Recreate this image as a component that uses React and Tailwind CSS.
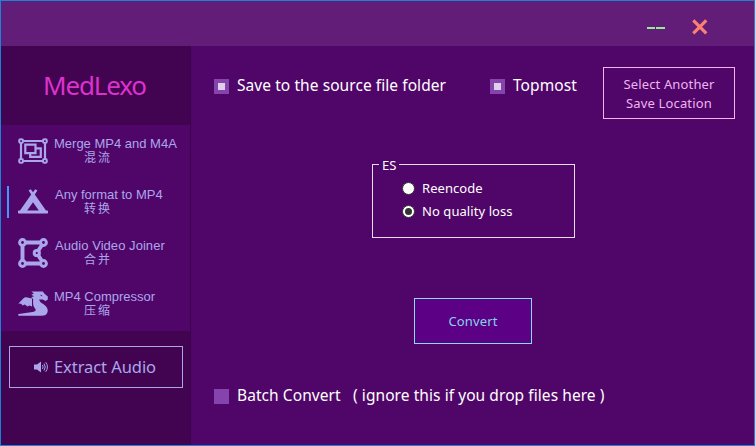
const CJK = "font-['Noto_Sans_CJK_SC',sans-serif]";

function MergeIcon() {
  return (
    <svg width="30" height="26" viewBox="0 0 30 26" fill="none" stroke="currentColor">
      <path d="M5.5 3h19M5.5 23h19M3 5.5v15M27 5.5v15" strokeWidth="2.2" />
      <g strokeWidth="2">
        <rect x="1.2" y="1.2" width="3.8" height="3.8" rx="1.4" />
        <rect x="25" y="1.2" width="3.8" height="3.8" rx="1.4" />
        <rect x="1.2" y="21" width="3.8" height="3.8" rx="1.4" />
        <rect x="25" y="21" width="3.8" height="3.8" rx="1.4" />
      </g>
      <path d="M7.3 6.7h10.2v8.4H7.3zM18 10.4h4.8v8.4H12.2v-3.6" strokeWidth="2.2" />
    </svg>
  );
}

function CampIcon() {
  return (
    <svg width="30" height="25" viewBox="0 0 30 25" fill="currentColor">
      <path d="M10.6 1.6L12.8.3 15 3.2 17.2.3l2.2 1.3-2.6 4L28 21.4h1.2q.8 0 .8.8v1.6q0 .8-.8.8H.8Q0 24.6 0 23.8v-1.6Q0 21.4.8 21.4H2L13.2 5.6zM15 13.2L9.2 21.4H20.8z" fillRule="evenodd" />
    </svg>
  );
}

function PolygonIcon() {
  return (
    <svg width="30" height="30" viewBox="0 0 30 30" fill="none" stroke="currentColor">
      <path d="M7 4.5h16M7 25.5h16M4.5 7v16M24 7l-4 6M20 17l4 6" strokeWidth="3.9" />
      <g strokeWidth="3">
        <circle cx="4.5" cy="4.5" r="2.9" />
        <circle cx="25.5" cy="4.5" r="2.9" />
        <circle cx="4.5" cy="25.5" r="2.9" />
        <circle cx="25.5" cy="25.5" r="2.9" />
        <circle cx="18.8" cy="15" r="2.6" />
      </g>
    </svg>
  );
}

function DragonIcon() {
  return (
    <svg width="30" height="25" viewBox="0 0 30 25" fill="currentColor">
      <path d="M13.3.4h11.5l1.7 2.4 3.3 2.8v3l-2.3 1.3-2.7-1.4h-3.6c.2 2 1.5 3 4 4.500 3 1.900 4.800 4.200 4.500 7.200-.4 3-2.400 4.500-6.200 4.500H.8c-1-.2-1-1.500 0-1.700l13.700-1.900c2.700-.4 4-1.400 2.700-3.400-1-1.500-2.100-2.900-2.100-5.300V7.900l-1.900-1.600 2.800-1L13.300 3.700l2.600-1.200zM22.700 3.600v1.300l2 .3z" fillRule="evenodd" />
      <path d="M.4 12.500L5.600 7.200q1.100-1 2.500-.9l5.900 1.300v7.900l-2.600-1-1.900 1-2.700-1.900-2.300 1-1.300-1.900z" />
    </svg>
  );
}

function MenuItem({ icon, title, sub, active, titleClass }) {
  return (
    <div className="flex h-[51px] items-center">
      <div className={"ml-[6px] h-8 w-[2px] " + (active ? "bg-[#3f9bfa]" : "")} />
      <div className="ml-[9px] flex w-[30px] justify-center">{icon}</div>
      <div className="ml-[6px] h-[34px] w-[124px] whitespace-nowrap pt-[3px]">
        <div className={"font-['Liberation_Sans',sans-serif] text-[13px] leading-[14px] " + titleClass}>{title}</div>
        <div className={"ml-[30px] text-[12px] leading-[12px] tracking-[2px] " + CJK}>{sub}</div>
      </div>
    </div>
  );
}

function Check({ checked, children }) {
  return (
    <div className="flex h-5 items-center gap-2 whitespace-pre text-white">
      <div className="flex size-[15px] items-center justify-center bg-[#8443ad]">
        {checked && <div className="size-[7px] bg-[#ded0e8]" />}
      </div>
      <span className="pb-[2px] text-[15.5px] leading-[18px] tracking-[0.07px]">{children}</span>
    </div>
  );
}

function Radio({ checked, children }) {
  return (
    <div className="flex h-[23px] items-center gap-[7px]">
      <div className="flex size-[13px] items-center justify-center rounded-full border border-[#333] bg-white">
        {checked && <div className="size-[7px] rounded-full bg-[#333]" />}
      </div>
      <span className="pt-px text-[13px] tracking-[0.07px]">{children}</span>
    </div>
  );
}

export default function App() {
  return (
    <div className="flex h-[446px] w-[755px] flex-col overflow-hidden border border-[#1883d7] bg-[#500669] font-['Noto_Sans',sans-serif]">
      <header className="flex h-[45px] shrink-0 bg-[#621d78]">
        <div className="ml-[646px] mt-[26px] flex h-[2px] w-[18px] gap-px">
          <div className="w-2 bg-[#90ee90]" />
          <div className="w-[9px] bg-[#90ee90]" />
        </div>
        <svg className="ml-[27px] mt-[18px]" width="16" height="16" viewBox="0 0 16 16" stroke="#fa8072" strokeWidth="3.2" fill="none">
          <path d="M1.3 1.3l13 13M14.3 1.3l-13 13" />
        </svg>
      </header>
      <div className="flex min-h-0 flex-1">
        <aside className="flex w-[190px] flex-col border-r border-[#3d044b] bg-[#420450] text-[#aba6ec]">
          <h1 className="flex h-[79px] items-center justify-center pr-[2px] text-[26px] tracking-[-1.15px] text-[#dc32cd]">MedLexo</h1>
          <nav className="h-[206px] bg-[#500669]">
            <MenuItem icon={<MergeIcon />} title="Merge MP4 and M4A" sub="混流" titleClass="" />
            <MenuItem icon={<CampIcon />} title="Any format to MP4" sub="转换" active titleClass="ml-px" />
            <MenuItem icon={<PolygonIcon />} title="Audio Video Joiner" sub="合并" titleClass="ml-px tracking-[0.05px]" />
            <MenuItem icon={<DragonIcon />} title="MP4 Compressor" sub="压缩" titleClass="" />
          </nav>
          <button className="ml-2 mt-[15px] flex h-[42px] w-[174px] items-center border border-[#aba6ec] pl-6 text-[16.5px] tracking-[-0.07px]">
            <svg width="15" height="12" viewBox="0 0 15 12" fill="currentColor">
              <path d="M0 3.5h3L7 .5v11L3 8.5H0z" />
              <path d="M8.5 4q1.2 2 0 4M10 2.5q2.5 3.5 0 7M11.7 1.2q3.5 4.8 0 9.6" fill="none" stroke="currentColor" />
            </svg>
            <span className="ml-[5px] whitespace-nowrap">Extract Audio</span>
          </button>
        </aside>
        <main className="flex-1 pl-[23px]">
          <div className="flex pt-[21px]">
            <div className="mt-[9px] w-[276px]"><Check checked>Save to the source file folder</Check></div>
            <div className="mt-[9px] w-[113px]"><Check checked>Topmost</Check></div>
            <button className="h-[52px] w-[132px] border border-[#eeb4f0] pt-[2px] text-[13px] leading-[19px] tracking-[0.15px] text-[#eeb4f0]">
              Select Another<br />Save Location
            </button>
          </div>
          <fieldset className="ml-[158px] mt-[36px] h-[83px] w-[203px] border border-[#e6dcea] pl-[29px] text-white">
            <legend className="-ml-[23px] h-[18px] px-[3px] text-[13px] leading-[21px]">ES</legend>
            <div className="pt-[4px]">
              <Radio>Reencode</Radio>
              <Radio checked>No quality loss</Radio>
            </div>
          </fieldset>
          <button className="ml-[200px] mt-[60px] block h-[46px] w-[118px] border border-[#84def0] bg-[#5c0085] pt-[2px] text-[13px] tracking-[0.15px] text-[#84d4ee]">Convert</button>
          <div className="mt-[42px]">
            <Check>Batch Convert   ( ignore this if you drop files here )</Check>
          </div>
        </main>
      </div>
    </div>
  );
}
